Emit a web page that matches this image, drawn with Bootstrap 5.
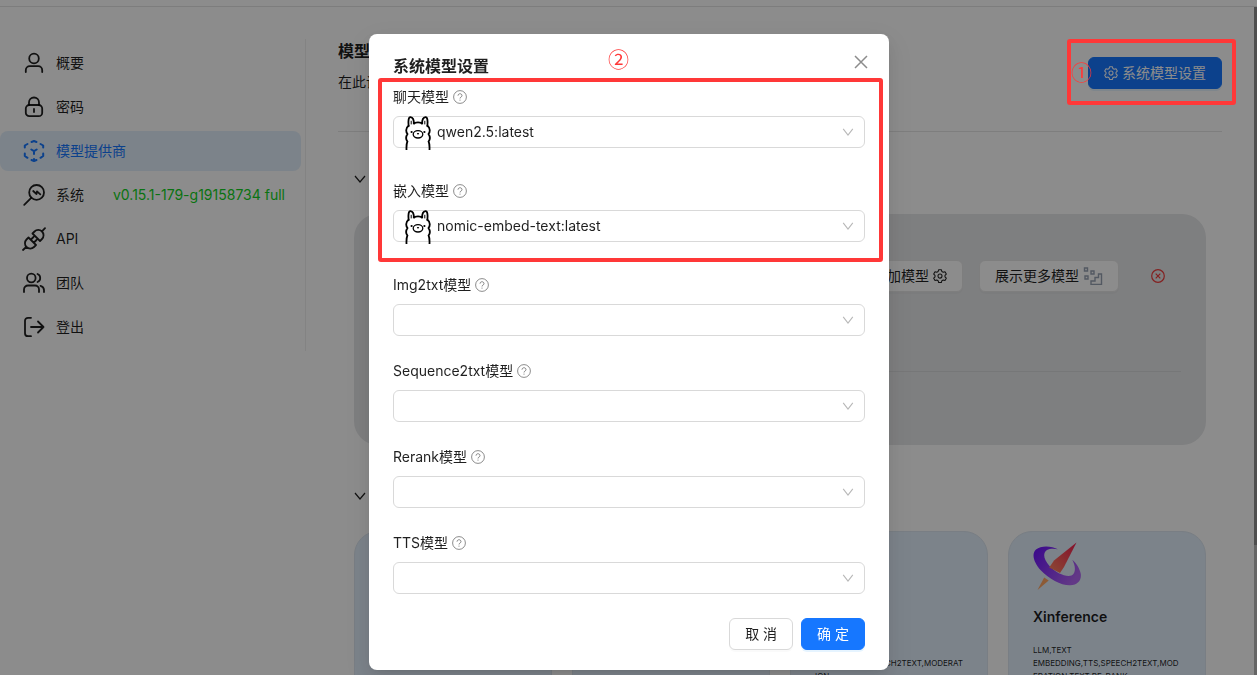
<!DOCTYPE html>
<html lang="zh-CN">
<head>
<meta charset="utf-8">
<meta name="viewport" content="width=device-width, initial-scale=1">
<title>系统模型设置</title>
<link href="https://cdn.jsdelivr.net/npm/bootstrap@5.3.0/dist/css/bootstrap.min.css" rel="stylesheet">
<style>
  :root { --accent: #1677ff; --marker: #ff3838; --line: #d9d9d9; }
  body { font: 14px/22px Inter, "Noto Sans CJK SC", sans-serif; color: rgba(0,0,0,.88); background: #fff; }
  .app-shell { height: 100vh; }
  .top-strip { height: 7px; border-bottom: 1px solid #e4e4e4; }
  .side-menu { width: 306px; margin-top: 32px; padding: 4px 4px 4px 0; border-right: 1px solid #efefef; }
  .side-menu .nav-link { height: 40px; padding: 0 0 0 22px; gap: 10px; border-radius: 8px; color: rgba(0,0,0,.88); white-space: nowrap; }
  .side-menu .nav-link.active { background: #e2effb; color: var(--accent); }
  .side-menu svg, .gear, .tip { flex: none; }
  .version { color: #12d222; margin-left: 19px; }
  .stroke { fill: none; stroke: currentColor; stroke-width: 1.8; stroke-linecap: round; stroke-linejoin: round; }
  .active .stroke { stroke-width: 2; }
  .content { padding: 32px 35px 0 32px; min-width: 0; }
  .content header { height: 68px; margin-bottom: 24px; }
  .page-title { font-size: 16px; line-height: 24px; font-weight: 600; }
  .rule { border-top: 1px solid #e6e6e6; }
  .btn { height: 32px; padding: 4px 15px; font-size: 14px; line-height: 22px; border-radius: 6px; }
  .btn-primary { --bs-btn-bg: var(--accent); --bs-btn-border-color: var(--accent); box-shadow: 0 2px 0 rgba(5,145,255,.1); }
  .btn-plain { background: #fff; border: 1px solid var(--line); color: rgba(0,0,0,.88); box-shadow: 0 2px 0 rgba(0,0,0,.02); }
  .added-actions { gap: 16px; }
  .added-actions .btn-plain { border-color: #e6e6e6; }
  .fold { height: 46px; padding: 0 16px; background: none; border: 0; color: inherit; }
  .first-fold { margin: 24px 0 12px; }
  .second-fold { margin: 28px 0 12px; }
  .added-card { background: #e6e7e9; border-radius: 24px; height: 231px; padding: 46px 25px 0; }
  .card-rule { margin-top: 79px; border-color: #d8d9db; }
  .provider-grid { display: grid; grid-template-columns: repeat(4, minmax(0, 1fr)); gap: 20px; }
  .provider { background: #e2eefb; border: 1px solid #dce6f0; border-radius: 24px; height: 240px; padding: 10px 24px; }
  .provider svg { width: 48px; height: 48px; }
  .provider h3 { font-size: 14px; line-height: 22px; font-weight: 600; margin: 16px 0; }
  .provider p { font-size: 8px; line-height: 13px; overflow-wrap: break-word; }
  .scroll-track { top: 7px; width: 3px; background: #b8b8b8; }
  .scroll-track > div { height: 538px; background: #8f8f8f; }
  .modal-backdrop { --bs-backdrop-opacity: .45; }
  .modal { padding-left: 1px; overflow: hidden; }
  .modal-dialog { max-width: 520px; margin: 34px auto 0; }
  .modal-content { border: 0; border-radius: 8px; padding: 20px 24px; color: rgba(0,0,0,.88);
    box-shadow: 0 6px 16px rgba(0,0,0,.08), 0 3px 6px -4px rgba(0,0,0,.12), 0 9px 28px 8px rgba(0,0,0,.05); }
  .close-x { top: 17px; right: 17px; width: 22px; height: 22px; padding: 0; background: none; border: 0; color: rgba(0,0,0,.45); }
  .close-x svg, .tip { display: block; }
  .tip { color: rgba(0,0,0,.45); }
  .field-label { display: flex; align-items: center; gap: 4px; margin-bottom: 8px; }
  .form-select { height: 32px; padding: 4px 32px 4px 11px; font-size: 14px; line-height: 22px; color: rgba(0,0,0,.88); border-color: var(--line); border-radius: 6px;
    background-image: url("data:image/svg+xml,%3Csvg xmlns='http://www.w3.org/2000/svg' viewBox='0 0 12 12'%3E%3Cpath d='M1.200 2.800 6 9l4.800-6.200' fill='none' stroke='%23b8b8b8' stroke-width='1.100'/%3E%3C/svg%3E");
    background-size: 12px 12px; background-position: right 10px center; }
  .with-logo .form-select { padding-left: 43px; }
  .llama { left: 12px; top: 0; width: 26px; height: 34px; }
  .fields { display: grid; gap: 24px; }
  .fields.loose { gap: 32px; margin-bottom: 32px; }
  .marker-box { border: 4px solid var(--marker); border-radius: 3px; pointer-events: none; }
  .marker-fields { inset: -8px -18px -20px -15px; }
  .marker-button { top: 39px; right: 21px; width: 169px; height: 66px; z-index: 1060; }
  .marker-num { color: var(--marker); font-size: 21px; line-height: 24px; font-family: "Noto Sans CJK SC", sans-serif; }
  .marker-num.two { top: 12px; left: 239px; }
  .marker-num.one { top: 16px; left: 0; }
</style>
</head>
<body class="overflow-hidden">
<svg class="d-none" aria-hidden="true">
  <symbol id="gear" viewBox="0 0 16 16"><path fill="none" stroke="currentColor" stroke-width="1.200" stroke-linejoin="round" d="M6.500.8h3l.6 2 1.600.9 2-.5 1.500 2.600-1.500 1.500v1.800l1.500 1.400-1.500 2.600-2-.5-1.600.9-.6 2h-3l-.6-2-1.600-.9-2 .5L.8 10.500l1.500-1.400V7.300L.8 5.800l1.500-2.600 2 .5 1.600-.9z"/><circle cx="8" cy="8.100" r="2.300" fill="none" stroke="currentColor" stroke-width="1.200"/></symbol>
  <symbol id="ask" viewBox="0 0 14 14"><g fill="none" stroke="currentColor"><circle cx="7" cy="7" r="6.400"/><path d="M5 5.700c0-2.600 4-2.600 4 0C9 7 7 7 7 8.500M7 9.600v1.100"/></g></symbol>
  <symbol id="down" viewBox="0 0 12 12"><path d="M1 3 6 9l5-6" fill="none" stroke="currentColor" stroke-width="1.200"/></symbol>
  <symbol id="llama" viewBox="0 0 26 34">
    <g fill="none" stroke="#000" stroke-width="1.800" stroke-linecap="round">
      <path d="M3.600 10C3 5 3.600 1 5.500 1.200 8 1.500 9 5 8.800 8.200 10 5.800 16 5.800 17.200 8.200 17 5 18 1.500 20.500 1.200 22.400 1 23 5 22.400 10"/>
      <path d="M3.600 9.800C.5 12 .8 16 2.500 18 .8 20.500.9 23.500 2.400 25.500 1.200 28 1.400 31 1.500 34M22.400 9.800c3.100 2.200 2.800 6.200 1.100 8.200 1.700 2.500 1.600 5.500.1 7.500 1.200 2.500 1 5.500.9 8.500"/>
      <ellipse cx="13" cy="18.300" rx="4.800" ry="3.700" stroke-width="1.300"/>
      <path d="M6.200 8V5.200M19.800 8V5.200" stroke-width="1"/>
    </g>
    <circle cx="6.600" cy="16" r="1.100"/><circle cx="19.400" cy="16" r="1.100"/><path d="M11.800 17h2.400L13 19z"/>
  </symbol>
</svg>

<div class="app-shell d-flex flex-column overflow-hidden">
  <div class="top-strip flex-shrink-0"></div>
  <div class="d-flex align-items-start">
    <nav class="side-menu nav flex-column flex-shrink-0 gap-1">
      <a class="nav-link d-flex align-items-center" href="#"><svg class="stroke" width="24" height="24"><circle cx="12" cy="7.500" r="4.800"/><path d="M3.800 21v-1.800a4 4 0 0 1 4-4h8.400a4 4 0 0 1 4 4V21"/></svg>概要</a>
      <a class="nav-link d-flex align-items-center" href="#"><svg class="stroke" width="24" height="24"><rect x="3.800" y="10" width="16.400" height="11.200" rx="3.500"/><path d="M7 10V7.500a5 5 0 0 1 10 0V10M12 14v3"/></svg>密码</a>
      <a class="nav-link d-flex align-items-center active" href="#" aria-current="page"><svg class="stroke" width="24" height="24"><path d="M9.500 3 12 2l2.500 1M2.800 8.500v-2L5.500 5M21.200 8.500v-2L18.500 5M2.800 14.500V17l2.700 1.800M21.200 14.500V17l-2.700 1.800M9.500 21l2.500 1 2.500-1M12 20v2M9.300 10.500l2.700 1.700 2.700-1.700M12 12.200V15"/></svg>模型提供商</a>
      <a class="nav-link d-flex align-items-center" href="#"><svg class="stroke" width="24" height="24"><circle cx="14.600" cy="9.400" r="7.400"/><path d="M9.200 14.800 2.200 21.800M11.200 8l3.300 3 .5-2.600 3.300 3"/></svg>系统<span class="version">v0.15.1-179-g19158734 full</span></a>
      <a class="nav-link d-flex align-items-center" href="#"><svg class="stroke" width="24" height="24"><path d="m6.500 10.500 7.500 7.500M6.500 10.500l-2 2a5 5 0 0 0 7.500 7.500l2-2M4.200 20 1 23M9 12.500l2.500-2.500M12 15.500l2.500-2.500M10.500 6.500 18 14M10.500 6.500l2-2A5 5 0 0 1 20 12l-2 2M20.200 4.200 23 1.200"/></svg>API</a>
      <a class="nav-link d-flex align-items-center" href="#"><svg class="stroke" width="24" height="24"><circle cx="9.300" cy="7" r="4.300"/><path d="M2 21v-2.500a4 4 0 0 1 4-4h7a4 4 0 0 1 4 4V21M15.500 3a4.300 4.300 0 0 1 0 8M18.500 14.800a4.500 4.500 0 0 1 3.500 4.200v2"/></svg>团队</a>
      <a class="nav-link d-flex align-items-center" href="#"><svg class="stroke" width="24" height="24"><path d="M9 2.800H6a3 3 0 0 0-3 3v12.400a3 3 0 0 0 3 3h3M9 12h12.500M16 6.500l5.500 5.500-5.500 5.500"/></svg>登出</a>
    </nav>

    <main class="content flex-grow-1">
      <header class="d-flex justify-content-between align-items-start">
        <div>
          <h1 class="page-title mb-2">模型提供商</h1>
          <p class="mb-0">在此设置模型参数。</p>
        </div>
        <button type="button" class="btn btn-primary d-flex align-items-center align-self-center gap-1"><svg class="gear" width="14" height="14"><use href="#gear"/></svg>系统模型设置</button>
      </header>
      <div class="rule"></div>
      <button type="button" class="fold first-fold d-flex align-items-center gap-2"><svg width="12" height="12"><use href="#down"/></svg>添加了的模型</button>
      <section class="added-card mx-3">
        <div class="d-flex justify-content-end align-items-center added-actions">
          <button type="button" class="btn btn-plain d-flex align-items-center gap-1">添加模型<svg class="gear" width="14" height="14"><use href="#gear"/></svg></button>
          <button type="button" class="btn btn-plain d-flex align-items-center gap-1">展示更多模型<svg width="20" height="18" fill="none" stroke="#98a2b3" stroke-width="1.400"><path d="M1.500 1h3v3h-3zM8 4h3v3H8zM2 9h3v3H2zM18.500 7v10.500H8V14h4v-3.500h3.500V7z"/></svg></button>
          <button type="button" class="btn border-0 px-3 d-flex align-items-center" aria-label="删除"><svg width="14" height="14" fill="none" stroke="#ef3b3b" stroke-width="1.200"><circle cx="7" cy="7" r="6.300"/><path d="m4.700 4.700 4.600 4.600M9.300 4.700 4.700 9.300"/></svg></button>
        </div>
        <div class="rule card-rule"></div>
      </section>
      <button type="button" class="fold second-fold d-flex align-items-center gap-2"><svg width="12" height="12"><use href="#down"/></svg>待添加的模型</button>
      <section class="provider-grid mx-3">
        <article class="provider"></article>
        <article class="provider"></article>
        <article class="provider"><svg></svg><h3>OpenAI</h3><p>LLM,TEXT EMBEDDING,SPEECH2TEXT,MODERATION</p></article>
        <article class="provider">
          <svg viewBox="0 0 48 48">
            <defs>
              <linearGradient id="ring" x2="1" y2=".6"><stop stop-color="#6a10ff"/><stop offset="1" stop-color="#b266f4"/></linearGradient>
              <linearGradient id="needle" x1="1" x2="0" y2="1"><stop stop-color="#f21c50"/><stop offset="1" stop-color="#ff8860"/></linearGradient>
            </defs>
            <path fill="url(#ring)" d="M25 7.300C19 3.800 8 3 3 7.500-2 12 1 21 8 28.500 16 37 28 43.500 37 43.300 45 43 48.500 38 47.800 32 47 27 43.500 21.500 39.300 17.800 43 25 42.800 31 38.500 33.500 33 35.500 23 31 16.500 24 10.500 17.500 9.500 11 14 8 17 6.300 21 6.500 25 7.300z"/>
            <path fill="url(#needle)" d="M43.500.5 21 18.500l-4.800 7L27 31l4-6z"/>
            <path fill="#ffa561" d="m11.200 35.500 4.500 3L4.500 48z"/>
          </svg>
          <h3>Xinference</h3>
          <p>LLM,TEXT EMBEDDING,TTS,SPEECH2TEXT,MODERATION,TEXT RE-RANK</p>
        </article>
      </section>
    </main>
  </div>
  <div class="scroll-track position-absolute end-0 bottom-0"><div></div></div>
</div>

<div class="modal-backdrop show"></div>

<div class="modal d-block" role="dialog" aria-labelledby="dialog-title">
  <div class="modal-dialog">
    <form class="modal-content">
      <h2 class="page-title mb-2" id="dialog-title">系统模型设置</h2>
      <span class="marker-num two position-absolute">②</span>
      <button type="button" class="close-x position-absolute d-flex align-items-center justify-content-center" aria-label="关闭"><svg width="14" height="14" stroke="currentColor" stroke-width="1.500"><path d="m1 1 12 12M13 1 1 13"/></svg></button>

      <div class="fields loose position-relative">
        <div>
          <label class="field-label" for="chat">聊天模型<svg class="tip" width="14" height="14"><use href="#ask"/></svg></label>
          <div class="with-logo position-relative"><select class="form-select" id="chat"><option>qwen2.5:latest</option></select><svg class="llama position-absolute"><use href="#llama"/></svg></div>
        </div>
        <div>
          <label class="field-label" for="embed">嵌入模型<svg class="tip" width="14" height="14"><use href="#ask"/></svg></label>
          <div class="with-logo position-relative"><select class="form-select" id="embed"><option>nomic-embed-text:latest</option></select><svg class="llama position-absolute"><use href="#llama"/></svg></div>
        </div>
        <div class="marker-box marker-fields position-absolute"></div>
      </div>

      <div class="fields">
        <div><label class="field-label" for="img">Img2txt模型<svg class="tip" width="14" height="14"><use href="#ask"/></svg></label><select class="form-select" id="img"><option></option></select></div>
        <div><label class="field-label" for="seq">Sequence2txt模型<svg class="tip" width="14" height="14"><use href="#ask"/></svg></label><select class="form-select" id="seq"><option></option></select></div>
        <div><label class="field-label" for="rerank">Rerank模型<svg class="tip" width="14" height="14"><use href="#ask"/></svg></label><select class="form-select" id="rerank"><option></option></select></div>
        <div><label class="field-label" for="tts">TTS模型<svg class="tip" width="14" height="14"><use href="#ask"/></svg></label><select class="form-select" id="tts"><option></option></select></div>
        <div class="d-flex justify-content-end gap-2"><button type="button" class="btn btn-plain">取 消</button><button type="submit" class="btn btn-primary">确 定</button></div>
      </div>
    </form>
  </div>
</div>

<div class="marker-box marker-button position-absolute"><span class="marker-num one position-absolute">①</span></div>
<script src="https://cdn.jsdelivr.net/npm/bootstrap@5.3.0/dist/js/bootstrap.bundle.min.js"></script>
</body>
</html>
